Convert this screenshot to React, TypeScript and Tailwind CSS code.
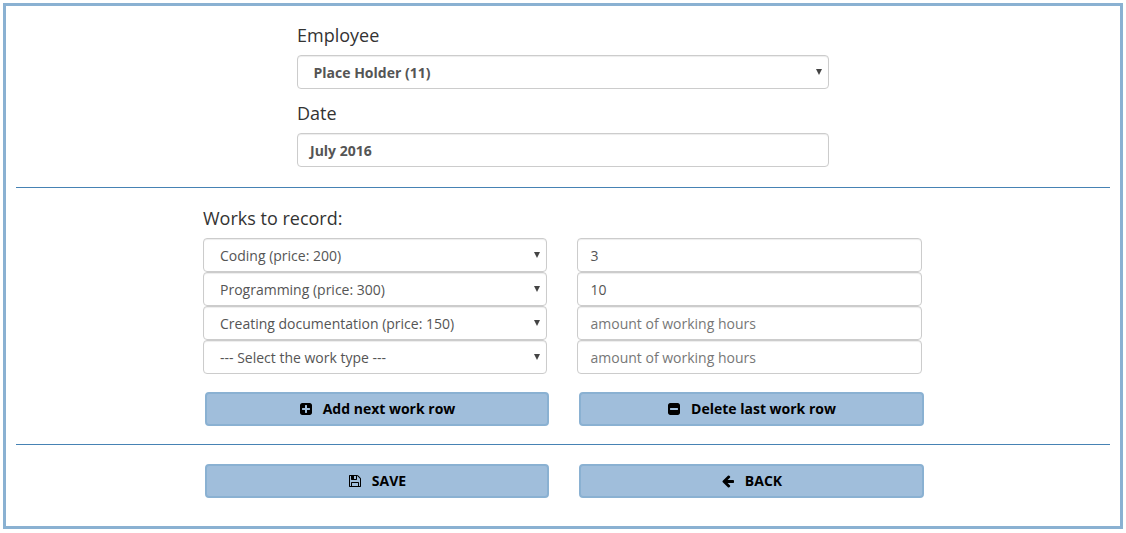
const FIELD = "flex h-[34px] w-full items-center rounded-[4px] border border-[#ccc] bg-white text-[14px] text-[#555] shadow-[inset_0_1px_1px_rgba(0,0,0,0.075)]";

const SQUARE = "M1664 416v960q0 119-84.5 203.5t-203.5 84.5h-960q-119 0-203.5-84.5t-84.5-203.5v-960q0-119 84.5-203.5t203.5-84.5h960q119 0 203.5 84.5t84.5 203.5z";

const ICONS = {
  plus: `M1408 960v-128q0-26-19-45t-45-19h-320v-320q0-26-19-45t-45-19h-128q-26 0-45 19t-19 45v320h-320q-26 0-45 19t-19 45v128q0 26 19 45t45 19h320v320q0 26 19 45t45 19h128q26 0 45-19t19-45v-320h320q26 0 45-19t19-45z${SQUARE}`,
  minus: `M1408 960v-128q0-26-19-45t-45-19h-896q-26 0-45 19t-19 45v128q0 26 19 45t45 19h896q26 0 45-19t19-45z${SQUARE}`,
  save: "M512 1536h768v-384h-768v384zm896 0h128v-896q0-14-10-38.5t-20-34.5l-281-281q-10-10-34-20t-39-10v416q0 40-28 68t-68 28h-576q-40 0-68-28t-28-68v-416h-128v1280h128v-416q0-40 28-68t68-28h832q40 0 68 28t28 68v416zm-384-928v-320q0-13-9.5-22.5t-22.5-9.5h-192q-13 0-22.5 9.5t-9.5 22.5v320q0 13 9.5 22.5t22.5 9.5h192q13 0 22.5-9.5t9.5-22.5zm640 32v928q0 40-28 68t-68 28h-1344q-40 0-68-28t-28-68v-1344q0-40 28-68t68-28h928q40 0 88 20t76 48l280 280q28 28 48 76t20 88z",
  back: "M1664 896v128q0 53-32.5 90.5t-84.5 37.5h-704l293 294q38 36 38 90t-38 90l-75 76q-37 37-90 37-52 0-91-37l-651-652q-37-37-37-90 0-52 37-91l651-650q38-38 91-38 52 0 90 38l75 74q38 38 38 91t-38 91l-293 293h704q52 0 84.5 37.5t32.5 90.5z",
};

function SelectBox({ children, bold }: { children: string; bold?: boolean }) {
  return (
    <div className={`${FIELD} justify-between pr-[6px] ${bold ? "pl-[15.5px] font-bold" : "pl-4"}`}>
      <span>{children}</span>
      <svg className="mb-px" width="6" height="6" viewBox="0 0 6 6" fill="#444"><path d="M0 0h6L3 6z" /></svg>
    </div>
  );
}

function ActionButton({ icon, children }: { icon: keyof typeof ICONS; children: string }) {
  return (
    <button className="flex h-[34px] items-center justify-center rounded-[4px] border-2 border-[#8ab1d2] bg-[#a0bedb] pb-px text-[14px] font-bold text-black">
      <svg className="mt-px" width="14" height="14" viewBox="0 0 1792 1792" fill="currentColor" fillRule="evenodd">
        <path d={ICONS[icon]} />
      </svg>
      <span className="ml-[10px]">{children}</span>
    </button>
  );
}

const rows = [
  ["Coding (price: 200)", "3"],
  ["Programming (price: 300)", "10"],
  ["Creating documentation (price: 150)", ""],
  ["--- Select the work type ---", ""],
];

export default function App() {
  return (
    <div className="h-[533px] bg-white pt-[3px] pl-[3px] font-['Open_Sans',sans-serif] text-[#333]">
      <div className="h-[526px] w-[1120px] border-3 border-[#8ab1d2] px-[10px]">
        <div className="ml-[281px] w-[532px] pt-[17px]">
          <div className="h-[32px] text-[18px] leading-[25px]">Employee</div>
          <SelectBox bold>Place Holder (11)</SelectBox>
          <div className="mt-[12px] h-[32px] text-[18px] leading-[25px]">Date</div>
          <div className={`${FIELD} px-3 font-bold`}>July 2016</div>
        </div>
        <div className="mt-[20px] h-px bg-[#4682b4]" />
        <div className="ml-[187px] w-[719px]">
          <div className="mt-[18px] h-[32px] text-[18px] leading-[25px]">Works to record:</div>
          {rows.map(([work, hours]) => (
            <div key={work} className="grid grid-cols-[344px_345px] gap-[30px]">
              <SelectBox>{work}</SelectBox>
              <div className={`${FIELD} px-[12.5px]`}>{hours || <span className="text-[#777]">amount of working hours</span>}</div>
            </div>
          ))}
        </div>
        <div className="mt-[18px] ml-[189px] grid grid-cols-[344px_345px] gap-[30px]">
          <ActionButton icon="plus">Add next work row</ActionButton>
          <ActionButton icon="minus">Delete last work row</ActionButton>
        </div>
        <div className="mt-[18px] h-px bg-[#4682b4]" />
        <div className="mt-[19px] ml-[189px] grid grid-cols-[344px_345px] gap-[30px]">
          <ActionButton icon="save">SAVE</ActionButton>
          <ActionButton icon="back">BACK</ActionButton>
        </div>
      </div>
    </div>
  );
}
